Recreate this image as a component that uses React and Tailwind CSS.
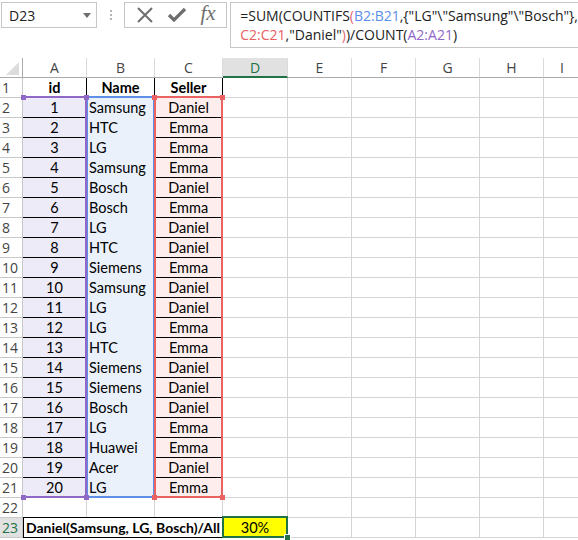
import React from 'react';

const rows = [
  [1, 'Samsung', 'Daniel'],
  [2, 'HTC', 'Emma'],
  [3, 'LG', 'Emma'],
  [4, 'Samsung', 'Emma'],
  [5, 'Bosch', 'Daniel'],
  [6, 'Bosch', 'Emma'],
  [7, 'LG', 'Daniel'],
  [8, 'HTC', 'Daniel'],
  [9, 'Siemens', 'Emma'],
  [10, 'Samsung', 'Daniel'],
  [11, 'LG', 'Daniel'],
  [12, 'LG', 'Emma'],
  [13, 'HTC', 'Emma'],
  [14, 'Siemens', 'Daniel'],
  [15, 'Siemens', 'Daniel'],
  [16, 'Bosch', 'Daniel'],
  [17, 'LG', 'Emma'],
  [18, 'Huawei', 'Emma'],
  [19, 'Acer', 'Daniel'],
  [20, 'LG', 'Emma'],
];

const cellFont = { fontFamily: 'Lato, "Open Sans", sans-serif' };
const uiFont = { fontFamily: '"Open Sans", "Noto Sans", sans-serif' };

// empty cells E..I
const EmptyTail = () => (
  <>
    <div className="w-[64px] shrink-0 border-r border-b border-[#d4d4d4]" />
    <div className="w-[64px] shrink-0 border-r border-b border-[#d4d4d4]" />
    <div className="w-[64px] shrink-0 border-r border-b border-[#d4d4d4]" />
    <div className="w-[64px] shrink-0 border-r border-b border-[#d4d4d4]" />
    <div className="w-[40px] shrink-0 border-r border-b border-[#d4d4d4]" />
  </>
);

const RowHeader = ({ n, active }) => (
  <div
    className={`w-[23px] shrink-0 border-r border-b border-[#c8c8c8] flex items-center pl-[2px] text-[14px] ${
      active ? 'bg-[#e1e1e1] text-[#217346]' : 'bg-white text-[#444]'
    }`}
    style={uiFont}
  >
    {n}
  </div>
);

const Toolbar = () => (
  <div className="flex items-start h-[58px] pt-[2px] pl-[1px]" style={uiFont}>
    <div className="w-[102px] h-[26px] border border-[#c6c6c6] flex items-center justify-between pl-[7px] pr-[5px] text-[14px] text-[#222]">
      <span>D23</span>
      <svg width="8" height="5" viewBox="0 0 8 5">
        <path d="M0 0h8L4 5z" fill="#6e6e6e" />
      </svg>
    </div>
    <div className="w-[30px] h-[26px] flex flex-col items-center justify-center gap-[2px]">
      <span className="w-[2px] h-[2px] bg-[#b4b4b4]" />
      <span className="w-[2px] h-[2px] bg-[#b4b4b4]" />
      <span className="w-[2px] h-[2px] bg-[#b4b4b4]" />
    </div>
    <div className="w-[110px] h-[26px] border border-[#c6c6c6] flex items-center justify-around px-[4px]">
      <svg width="18" height="16" viewBox="0 0 18 16">
        <path d="M2 1l14 14M16 1L2 15" stroke="#6e6e6e" strokeWidth="2" />
      </svg>
      <svg width="20" height="16" viewBox="0 0 20 16">
        <path d="M2 8l5 5L18 2" stroke="#6e6e6e" strokeWidth="3.2" fill="none" />
      </svg>
      <span
        className="italic text-[21px] leading-none text-[#6e6e6e] -mt-[3px]"
        style={{ fontFamily: '"Liberation Serif", serif' }}
      >
        fx
      </span>
    </div>
    <div className="ml-[3px] flex-1 h-[46px] border border-r-0 border-[#c6c6c6] pl-[9px] pt-[3px] text-[14px] leading-[19px] text-[#222] whitespace-nowrap">
      <div>
        =SUM(COUNTIFS<span className="text-[#e06a7a]">(</span>
        <span className="text-[#5b8ee8]">B2:B21</span>
        {',{"LG"\\"Samsung"\\"Bosch"},'}
      </div>
      <div>
        <span className="text-[#e8605f]">C2:C21</span>
        {',"Daniel"'}
        <span className="text-[#e06a7a]">)</span>)/COUNT(
        <span className="text-[#9068c8]">A2:A21</span>)
      </div>
    </div>
  </div>
);

const ColumnHeader = () => (
  <div className="flex h-[20px] text-[14px] text-[#444]" style={uiFont}>
    <div className="w-[23px] shrink-0 border-r border-b border-[#ababab] relative">
      <svg className="absolute left-[6px] top-[4px]" width="13" height="13" viewBox="0 0 13 13">
        <path d="M13 0v13H0z" fill="#dcdcdc" />
      </svg>
    </div>
    <div className="w-[64px] shrink-0 border-r border-b border-r-[#dadada] border-b-[#ababab] flex items-center justify-center">A</div>
    <div className="w-[68px] shrink-0 border-r border-b border-r-[#dadada] border-b-[#ababab] flex items-center justify-center">B</div>
    <div className="w-[68px] shrink-0 border-r border-b border-r-[#dadada] border-b-[#ababab] flex items-center justify-center">C</div>
    <div className="w-[65px] shrink-0 border-r border-r-[#dadada] border-b-2 border-b-[#217346] bg-[#e1e1e1] text-[#217346] flex items-center justify-center">D</div>
    <div className="w-[64px] shrink-0 border-r border-b border-r-[#dadada] border-b-[#ababab] flex items-center justify-center">E</div>
    <div className="w-[64px] shrink-0 border-r border-b border-r-[#dadada] border-b-[#ababab] flex items-center justify-center">F</div>
    <div className="w-[64px] shrink-0 border-r border-b border-r-[#dadada] border-b-[#ababab] flex items-center justify-center">G</div>
    <div className="w-[64px] shrink-0 border-r border-b border-r-[#dadada] border-b-[#ababab] flex items-center justify-center">H</div>
    <div className="w-[40px] shrink-0 border-b border-b-[#ababab] flex items-center pl-[16px]">I</div>
  </div>
);

export default function App() {
  return (
    <div className="w-[578px] h-[540px] overflow-hidden bg-white relative">
      <Toolbar />
      <div className="relative" style={cellFont}>
        <ColumnHeader />

        {/* row 1: table headers */}
        <div className="flex h-[20px] text-[14.5px] text-black">
          <RowHeader n={1} />
          <div className="w-[64px] shrink-0 border-r border-b border-r-black border-b-[#d4d4d4] flex items-center justify-center font-bold">id</div>
          <div className="w-[68px] shrink-0 border-r border-b border-r-black border-b-[#d4d4d4] flex items-center justify-center font-bold">Name</div>
          <div className="w-[68px] shrink-0 border-r border-b border-r-black border-b-[#d4d4d4] flex items-center justify-center font-bold">Seller</div>
          <div className="w-[65px] shrink-0 border-r border-b border-[#d4d4d4]" />
          <EmptyTail />
        </div>

        {rows.map(([id, name, seller], i) => (
          <div key={id} className="flex h-[20px] text-[14.5px] text-black">
            <RowHeader n={i + 2} />
            <div className="w-[64px] shrink-0 border-r border-b border-r-[#ecebf7] border-b-black bg-[#ecebf7] flex items-center justify-center">{id}</div>
            <div className="w-[68px] shrink-0 border-r border-b border-[#eaf1fb] bg-[#eaf1fb] flex items-center pl-[2px]">{name}</div>
            <div className="w-[68px] shrink-0 border-r border-b border-r-[#fdeded] border-b-black bg-[#fdeded] flex items-center justify-center">{seller}</div>
            <div className="w-[65px] shrink-0 border-r border-b border-[#d4d4d4]" />
            <EmptyTail />
          </div>
        ))}

        {/* row 22 */}
        <div className="flex h-[20px]">
          <RowHeader n={22} />
          <div className="w-[64px] shrink-0 border-r border-b border-[#d4d4d4]" />
          <div className="w-[68px] shrink-0 border-r border-b border-[#d4d4d4]" />
          <div className="w-[68px] shrink-0 border-r border-b border-[#d4d4d4]" />
          <div className="w-[65px] shrink-0 border-r border-b border-[#d4d4d4]" />
          <EmptyTail />
        </div>

        {/* row 23 */}
        <div className="flex h-[20px] text-[14.5px] text-black">
          <RowHeader n={23} active />
          <div className="w-[200px] shrink-0 border border-black -mt-px h-[21px] flex items-center pl-[2px] text-[14px] font-bold whitespace-nowrap">
            Daniel(Samsung, LG, Bosch)/All
          </div>
          <div className="w-[65px] shrink-0 border-r border-b border-[#d4d4d4] bg-[#ffff00] flex items-center justify-center">30%</div>
          <EmptyTail />
        </div>

        {/* formula range highlights */}
        <div className="absolute left-[86px] top-[38px] w-[69px] h-[402px] border-2 border-[#5f90e8] pointer-events-none" />
        <div className="absolute left-[23px] top-[38px] w-[64px] h-[402px] border-2 border-l-0 border-[#9068c8] pointer-events-none" />
        <div className="absolute left-[154px] top-[38px] w-[69px] h-[402px] border-2 border-[#ea6262] pointer-events-none" />
        <div className="absolute left-[21px] top-[37px] w-[5px] h-[5px] bg-[#9068c8]" />
        <div className="absolute left-[84px] top-[37px] w-[5px] h-[5px] bg-[#9068c8]" />
        <div className="absolute left-[21px] top-[437px] w-[5px] h-[5px] bg-[#9068c8]" />
        <div className="absolute left-[84px] top-[437px] w-[5px] h-[5px] bg-[#9068c8]" />
        <div className="absolute left-[152px] top-[37px] w-[5px] h-[5px] bg-[#ea6262]" />
        <div className="absolute left-[220px] top-[37px] w-[5px] h-[5px] bg-[#ea6262]" />
        <div className="absolute left-[152px] top-[437px] w-[5px] h-[5px] bg-[#ea6262]" />
        <div className="absolute left-[220px] top-[437px] w-[5px] h-[5px] bg-[#ea6262]" />

        {/* active cell D23 */}
        <div className="absolute left-[222px] top-[458px] w-[66px] h-[22px] border-2 border-[#217346] pointer-events-none" />
        <div className="absolute left-[284px] top-[476px] w-[7px] h-[7px] bg-[#217346] border border-white" />
      </div>
    </div>
  );
}
